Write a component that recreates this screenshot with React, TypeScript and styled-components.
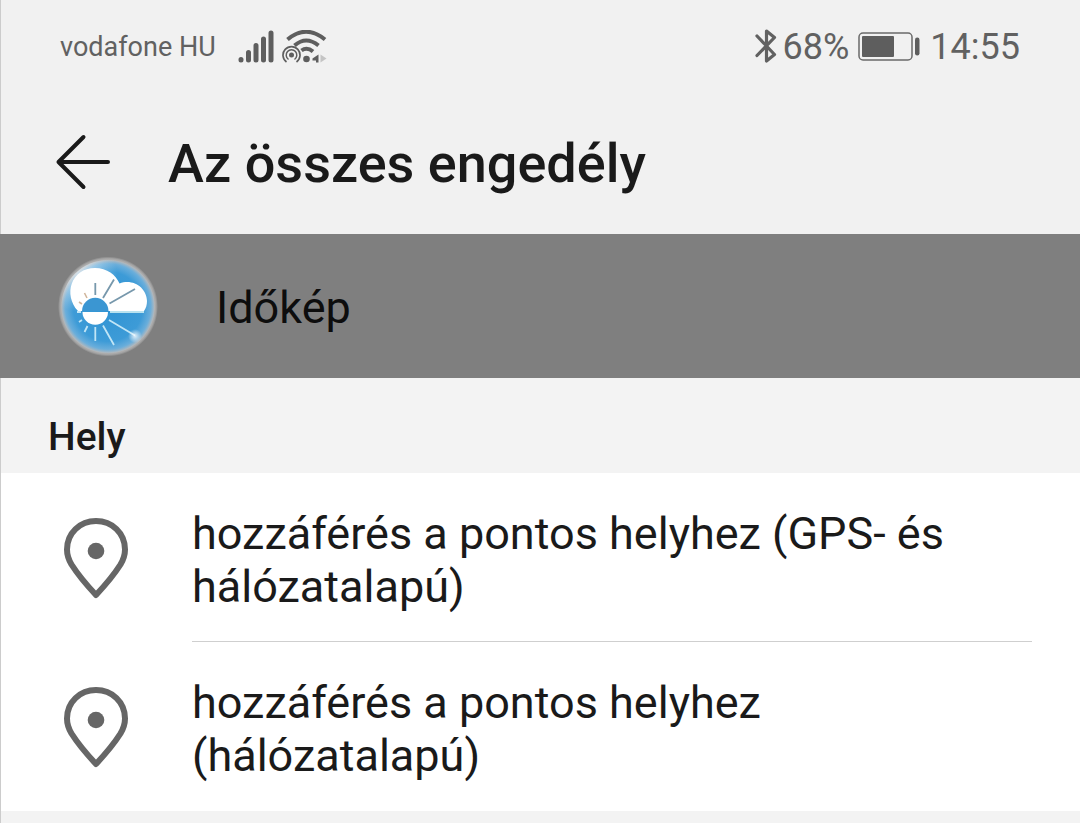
import React from 'react';
import styled, { createGlobalStyle } from 'styled-components';

const GlobalStyle = createGlobalStyle`
  *, *::before, *::after { box-sizing: border-box; }
  body {
    margin: 0;
    background: #f3f3f3;
    color: #1a1a1a;
    font-family: Roboto, 'Noto Sans', sans-serif;
  }
`;

const Screen = styled.div`
  min-height: 100vh;
  border-left: 1px solid #cccccc;
`;

const TopArea = styled.div`
  background: #f1f1f1;
`;

const StatusBar = styled.div`
  display: flex;
  justify-content: space-between;
  align-items: center;
  height: 92px;
  padding: 2px 60px 0 59px;
  color: #616161;
`;

const StatusGroup = styled.div`
  display: flex;
  align-items: center;
`;

const Carrier = styled.span`
  margin-right: 22px;
  font-size: 27px;
  line-height: 32px;
`;

const StatusText = styled.span`
  font-size: 36px;
  line-height: 44px;
`;

const StatusIcon = styled.svg<{ $before?: number; $after: number }>`
  display: block;
  flex: none;
  margin-left: ${({ $before = 0 }) => $before}px;
  margin-right: ${({ $after }) => $after}px;
`;

const AppBar = styled.header`
  display: flex;
  align-items: center;
  height: 142px;
  padding: 2px 48px 0 53px;
`;

const BackButton = styled.button`
  display: flex;
  flex: none;
  margin: 0 56px 4px 0;
  padding: 0;
  border: 0;
  background: none;
  color: inherit;
  cursor: pointer;
`;

const Title = styled.h1`
  margin: 0;
  font-size: 54px;
  font-weight: 500;
  line-height: 64px;
`;

const AppBand = styled.section`
  display: flex;
  align-items: center;
  gap: 56px;
  margin-left: -1px;
  height: 144px;
  padding: 2px 48px 0 56px;
  background: #7f7f7f;
`;

const AppName = styled.span`
  color: #0d0d0d;
  font-size: 45px;
  line-height: 53px;
`;

const SectionTitle = styled.h2`
  margin: 0;
  padding: 35px 48px 12px 47px;
  font-size: 39px;
  font-weight: 500;
  line-height: 48px;
`;

const List = styled.ul`
  margin: 0;
  padding: 0;
  background: #ffffff;
  list-style: none;
`;

const Row = styled.li`
  display: flex;
  align-items: center;
  gap: 58px;
  padding: 0 48px 0 59px;
`;

const RowText = styled.div`
  flex: 1;
  padding: 34px 0 28px;
  border-bottom: 1px solid #cfcfcf;
  font-size: 45px;
  line-height: 53px;

  ${Row}:last-child & {
    border-bottom-color: transparent;
  }
`;

const RowLabel = styled.span`
  display: block;
  max-width: 780px;
`;

const SignalIcon = () => (
  <StatusIcon $after={7} width="37" height="34" viewBox="0 0 37 34" stroke="#5e5e5e" strokeWidth="5" strokeLinecap="round" aria-hidden="true">
    <path d="M3 29.500V30M10.500 30V22.500M18 30V15.500M25.500 30V9M33 30V3" />
  </StatusIcon>
);

const WifiIcon = () => (
  <StatusIcon $after={0} width="46" height="34" viewBox="0 0 46 34" fill="none" stroke="#5e5e5e" aria-hidden="true">
    <path d="M5.500 9.500Q24-6 43 9.500" strokeWidth="4" />
    <path d="M12.500 15.500Q24 5.500 36.500 15.500" strokeWidth="4" />
    <path d="M19.500 20.500Q25 16.500 31 21.500" strokeWidth="4" />
    <circle cx="9.500" cy="25" r="2.500" fill="#5e5e5e" stroke="none" />
    <path d="M6.500 29.500A5.300 5.300 0 1 1 12.500 29.500" strokeWidth="1.500" />
    <path d="M4.500 32A8.500 8.500 0 1 1 14.500 32" strokeWidth="1.700" />
    <circle cx="24.500" cy="29" r="3.300" fill="#5e5e5e" stroke="none" />
    <path d="M36.500 24.500V32.500H34V30.500H30.500V28.500Z" fill="#5e5e5e" stroke="none" />
    <path d="M38.500 24.500L44.500 28.500L38.500 32.500Z" fill="#c4c4c4" stroke="none" />
  </StatusIcon>
);

const BluetoothIcon = () => (
  <StatusIcon $after={5} width="24" height="36" viewBox="0 0 24 36" fill="none" stroke="#616161" strokeWidth="3.200" strokeLinejoin="round" strokeLinecap="round" aria-hidden="true">
    <path d="M3 7L20.500 25.500L12.500 32V2L20.500 8.500L3 26.500" />
  </StatusIcon>
);

const BatteryIcon = () => (
  <StatusIcon $before={9} $after={10} width="62" height="30" viewBox="0 0 62 30" aria-hidden="true">
    <rect x="1" y="1" width="53" height="27" rx="4" fill="none" stroke="#6a6a6a" strokeWidth="1.500" />
    <rect x="4" y="4" width="32" height="21" rx="1" fill="#5e5e5e" />
    <rect x="57" y="5.500" width="4.500" height="18" rx="2.200" fill="#5e5e5e" />
  </StatusIcon>
);

const BackIcon = () => (
  <svg width="58" height="58" viewBox="0 0 58 58" fill="none" stroke="#1a1a1a" strokeWidth="4" strokeLinecap="round" strokeLinejoin="round" aria-hidden="true">
    <path d="M29.500 4L4.500 29L29.500 54M4.500 29H54" />
  </svg>
);

const PinIcon = () => (
  <svg width="74" height="84" viewBox="0 0 74 84" fill="none" aria-hidden="true">
    <path
      d="M36 79C29 71.500 18.500 59.500 11.500 48.500C8.500 43.500 7 38.500 7 33.500C7 17 20 5 36 5C52 5 65 17 65 33.500C65 38.500 63.500 43.500 60.500 48.500C53.500 59.500 43 71.500 36 79Z"
      stroke="#666666"
      strokeWidth="6"
      strokeLinejoin="round"
    />
    <circle cx="36" cy="35" r="8.300" fill="#666666" />
  </svg>
);

const WeatherLogo = () => (
  <svg width="104" height="104" viewBox="0 0 104 104" fill="none" aria-hidden="true">
    <defs>
      <radialGradient id="sky" cx="0.5" cy="0.5" r="0.5">
        <stop offset="0" stopColor="#2f93d3" />
        <stop offset="0.75" stopColor="#3d9bd7" />
        <stop offset="0.92" stopColor="#6aaedb" />
        <stop offset="1" stopColor="#b0b8be" />
      </radialGradient>
      <radialGradient id="rim" cx="0.5" cy="0.5" r="0.5">
        <stop offset="0.92" stopColor="#b4b4b4" />
        <stop offset="0.96" stopColor="#a5a5a5" />
        <stop offset="1" stopColor="#7f7f7f" />
      </radialGradient>
      <radialGradient id="shine" cx="0.2" cy="0.16" r="0.4">
        <stop offset="0" stopColor="#ffffff" stopOpacity="0.6" />
        <stop offset="1" stopColor="#ffffff" stopOpacity="0" />
      </radialGradient>
      <radialGradient id="spark" cx="0.5" cy="0.5" r="0.5">
        <stop offset="0" stopColor="#ffffff" stopOpacity="0.8" />
        <stop offset="1" stopColor="#ffffff" stopOpacity="0" />
      </radialGradient>
    </defs>
    <circle cx="52" cy="51.500" r="50" fill="url(#rim)" />
    <circle cx="52" cy="51.500" r="46.500" fill="url(#sky)" />
    <circle cx="52" cy="51.500" r="46.500" fill="url(#shine)" />
    <path d="M22 56C7 40 15 13 39 13C51 13 60 20 63.500 28.500C77 23 91 33 91 46C91 50 90 53 88 56Z" fill="#ffffff" />
    <path d="M54 57H88" stroke="#b9e2ef" strokeWidth="2" />
    <path d="M26 56A13 13 0 0 1 52.500 56Z" fill="#3b96d2" />
    <path d="M26.500 57A12.700 12.700 0 0 0 52 57Z" fill="#ffffff" />
    <path d="M39.300 28V40M47 43L58 24.500M53.500 48.500L79 34" stroke="#7798ac" strokeWidth="1.800" />
    <path d="M28.500 38L31 43M23 47L26 49" stroke="#d0b69c" strokeWidth="1.600" />
    <path d="M53 65L79 80.500M47 70.500L58 90M39.300 72V86M31.500 71L28.500 77M26 65L23 67M21 57H25" stroke="#c0e5f6" strokeWidth="1.800" />
    <circle cx="79" cy="81" r="7" fill="url(#spark)" />
  </svg>
);

const permissions = [
  'hozzáférés a pontos helyhez (GPS- és hálózatalapú)',
  'hozzáférés a pontos helyhez (hálózatalapú)',
];

export default function App() {
  return (
    <>
      <GlobalStyle />
      <Screen>
        <TopArea>
          <StatusBar>
            <StatusGroup>
              <Carrier>vodafone HU</Carrier>
              <SignalIcon />
              <WifiIcon />
            </StatusGroup>
            <StatusGroup>
              <BluetoothIcon />
              <StatusText>68%</StatusText>
              <BatteryIcon />
              <StatusText>14:55</StatusText>
            </StatusGroup>
          </StatusBar>
          <AppBar>
            <BackButton type="button" aria-label="Vissza">
              <BackIcon />
            </BackButton>
            <Title>Az összes engedély</Title>
          </AppBar>
        </TopArea>
        <main>
          <AppBand>
            <WeatherLogo />
            <AppName>Időkép</AppName>
          </AppBand>
          <SectionTitle>Hely</SectionTitle>
          <List>
            {permissions.map((label) => (
              <Row key={label}>
                <PinIcon />
                <RowText>
                  <RowLabel>{label}</RowLabel>
                </RowText>
              </Row>
            ))}
          </List>
        </main>
      </Screen>
    </>
  );
}
